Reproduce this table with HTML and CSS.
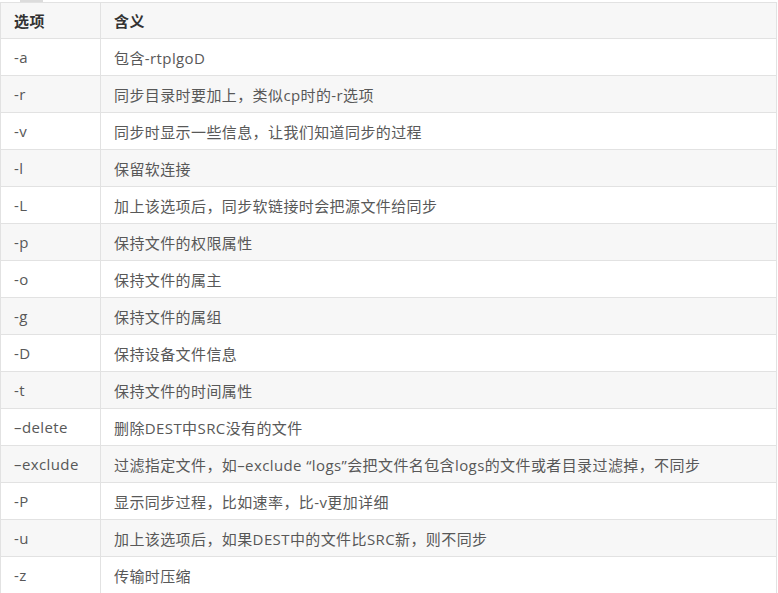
FILE: index.html
```html
<!DOCTYPE html>
<html lang="zh-CN">
<head>
<meta charset="utf-8">
<title>rsync 选项</title>
<link rel="stylesheet" href="styles.css">
</head>
<body>
<div class="stub"></div>
<table class="opts">
  <thead>
    <tr><th class="c1">选项</th><th>含义</th></tr>
  </thead>
  <tbody>
    <tr><td class="c1">-a</td><td>包含-rtplgoD</td></tr>
    <tr><td class="c1">-r</td><td>同步目录时要加上，类似cp时的-r选项</td></tr>
    <tr><td class="c1">-v</td><td>同步时显示一些信息，让我们知道同步的过程</td></tr>
    <tr><td class="c1">-l</td><td>保留软连接</td></tr>
    <tr><td class="c1">-L</td><td>加上该选项后，同步软链接时会把源文件给同步</td></tr>
    <tr><td class="c1">-p</td><td>保持文件的权限属性</td></tr>
    <tr><td class="c1">-o</td><td>保持文件的属主</td></tr>
    <tr><td class="c1">-g</td><td>保持文件的属组</td></tr>
    <tr><td class="c1">-D</td><td>保持设备文件信息</td></tr>
    <tr><td class="c1">-t</td><td>保持文件的时间属性</td></tr>
    <tr><td class="c1">–delete</td><td>删除DEST中SRC没有的文件</td></tr>
    <tr><td class="c1">–exclude</td><td>过滤指定文件，如–exclude “logs”会把文件名包含logs的文件或者目录过滤掉，不同步</td></tr>
    <tr><td class="c1">-P</td><td>显示同步过程，比如速率，比-v更加详细</td></tr>
    <tr><td class="c1">-u</td><td>加上该选项后，如果DEST中的文件比SRC新，则不同步</td></tr>
    <tr><td class="c1">-z</td><td>传输时压缩</td></tr>
  </tbody>
</table>
</body>
</html>
```
FILE: styles.css
```css
html, body {
  margin: 0;
  padding: 0;
  background: #ffffff;
}
body {
  font-family: "Open Sans", "Noto Sans CJK SC", sans-serif;
  font-size: 15px;
  color: #585858;
}
.stub {
  width: 23px;
  height: 2px;
  margin-left: 20px;
  background: #dcdcdc;
}
.opts {
  width: 777px;
  border-collapse: collapse;
  table-layout: fixed;
}
.opts th,
.opts td {
  border: 1px solid #e2e2e2;
  height: 36px;
  padding: 0 0 0 13px;
  text-align: left;
  vertical-align: middle;
  box-sizing: border-box;
  white-space: nowrap;
  font-size: 15px;
  letter-spacing: 0.4px;
}
.opts th {
  font-weight: bold;
  color: #333333;
  background: #f7f7f7;
  height: 36px;
}
.opts .c1 {
  width: 100px;
}
.opts tbody tr:nth-child(even) td {
  background: #f7f7f7;
}
.opts tbody tr td {
  height: 37px;
}
```
